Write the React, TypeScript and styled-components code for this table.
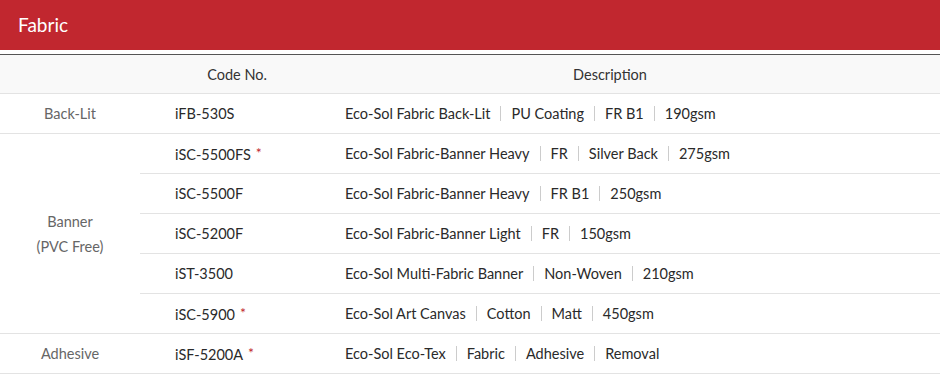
import React from 'react';
import styled, { createGlobalStyle } from 'styled-components';

const GlobalStyle = createGlobalStyle`
  body {
    margin: 0;
    background: #fff;
    font-family: Lato, 'Liberation Sans', sans-serif;
  }
`;

interface Item {
  code: string;
  star?: boolean;
  desc: string[];
}

interface Group {
  name: string[];
  items: Item[];
}

const groups: Group[] = [
  {
    name: ['Back-Lit'],
    items: [{ code: 'iFB-530S', desc: ['Eco-Sol Fabric Back-Lit', 'PU Coating', 'FR B1', '190gsm'] }],
  },
  {
    name: ['Banner', '(PVC Free)'],
    items: [
      { code: 'iSC-5500FS', star: true, desc: ['Eco-Sol Fabric-Banner Heavy', 'FR', 'Silver Back', '275gsm'] },
      { code: 'iSC-5500F', desc: ['Eco-Sol Fabric-Banner Heavy', 'FR B1', '250gsm'] },
      { code: 'iSC-5200F', desc: ['Eco-Sol Fabric-Banner Light', 'FR', '150gsm'] },
      { code: 'iST-3500', desc: ['Eco-Sol Multi-Fabric Banner', 'Non-Woven', '210gsm'] },
      { code: 'iSC-5900', star: true, desc: ['Eco-Sol Art Canvas', 'Cotton', 'Matt', '450gsm'] },
    ],
  },
  {
    name: ['Adhesive'],
    items: [{ code: 'iSF-5200A', star: true, desc: ['Eco-Sol Eco-Tex', 'Fabric', 'Adhesive', 'Removal'] }],
  },
];

const App: React.FC = () => {
  return (
    <>
      <GlobalStyle />
      <Section>
        <TitleBar>Fabric</TitleBar>
        <Table>
          <colgroup>
            <col style={{ width: 140 }} />
            <col style={{ width: 194 }} />
            <col />
          </colgroup>
          <thead>
            <tr>
              <HeadCell />
              <HeadCell>Code No.</HeadCell>
              <HeadCell $padRight={54}>Description</HeadCell>
            </tr>
          </thead>
          <tbody>
            {groups.map((group) =>
              group.items.map((item, i) => (
                <tr key={item.code}>
                  {i === 0 && (
                    <CategoryCell rowSpan={group.items.length}>
                      {group.name.map((line) => (
                        <div key={line}>{line}</div>
                      ))}
                    </CategoryCell>
                  )}
                  <CodeCell>
                    {item.code}
                    {item.star && <Star>*</Star>}
                  </CodeCell>
                  <DescCell>
                    {item.desc.map((part, j) => (
                      <React.Fragment key={part}>
                        {j > 0 && <Divider />}
                        {part}
                      </React.Fragment>
                    ))}
                  </DescCell>
                </tr>
              ))
            )}
          </tbody>
        </Table>
      </Section>
    </>
  );
};

export default App;

const Section = styled.section`
  width: 940px;
`;

const TitleBar = styled.h2`
  margin: 0 0 4px;
  height: 50px;
  padding: 0 18px 2px;
  display: flex;
  align-items: center;
  background: #c1272f;
  color: #fff;
  font-size: 19px;
  font-weight: 400;
  box-sizing: border-box;
`;

const Table = styled.table`
  width: 100%;
  border-collapse: collapse;
  table-layout: fixed;
  border-top: 1px solid #555;
  font-size: 14.5px;
  color: #2a2a2a;
`;

const HeadCell = styled.th<{ $padRight?: number }>`
  height: 39px;
  padding: 0 ${({ $padRight }) => $padRight || 0}px 0 0;
  background: #f9f9f9;
  border-bottom: 1px solid #e3e3e3;
  font-weight: 400;
  color: #333;
  text-align: center;
  box-sizing: border-box;
`;

const CategoryCell = styled.td`
  text-align: center;
  color: #666;
  line-height: 25px;
  border-bottom: 1px solid #e3e3e3;
  padding: 0;
`;

const CodeCell = styled.td`
  height: 40px;
  padding: 0 0 0 35px;
  border-bottom: 1px solid #e3e3e3;
  box-sizing: border-box;
`;

const DescCell = styled.td`
  padding: 0 0 0 11px;
  border-bottom: 1px solid #e3e3e3;
  white-space: nowrap;
`;

const Star = styled.span`
  color: #c1272f;
  margin-left: 5px;
  font-size: 14px;
  vertical-align: 2px;
`;

const Divider = styled.span`
  display: inline-block;
  width: 1px;
  height: 15px;
  margin: 0 10px;
  background: #ccc;
  vertical-align: -2px;
`;
